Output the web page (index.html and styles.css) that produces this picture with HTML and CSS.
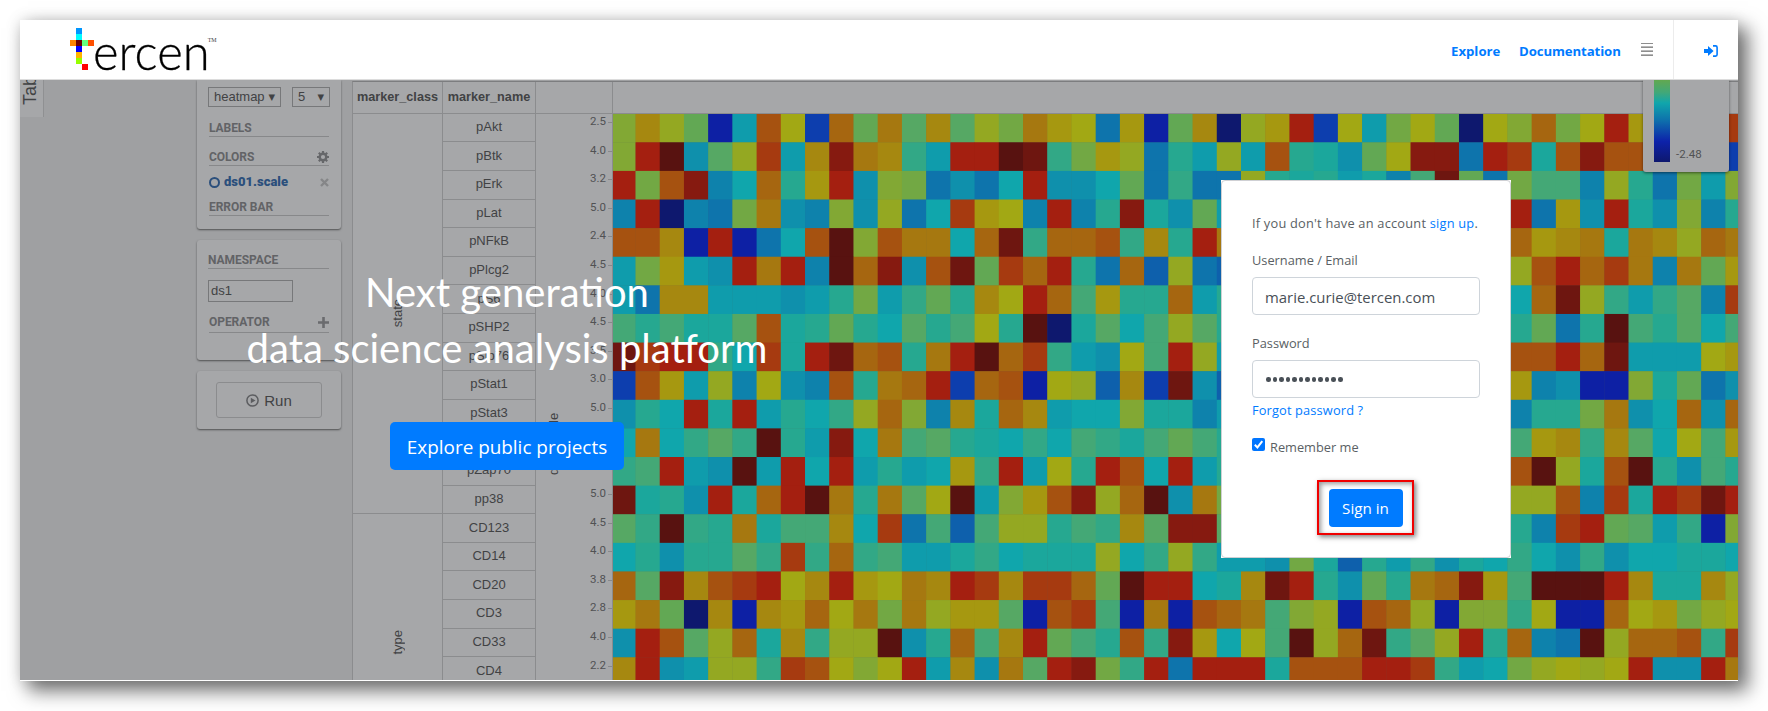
FILE: index.html
```
<!DOCTYPE html>
<html lang="en">
<head>
<meta charset="utf-8">
<title>Tercen</title>
<link rel="stylesheet" href="styles.css">
</head>
<body>
<div class="window">
  <header class="topbar">
    <a class="logo">
      <svg class="logo-mark" width="24" height="42" viewBox="0 0 24 42" shape-rendering="crispEdges">
        <rect x="6" y="0" width="6" height="6" fill="#0096ff"/>
        <rect x="6" y="6" width="6" height="6" fill="#00fcff"/>
        <rect x="0" y="12" width="6" height="6" fill="#ff8400"/>
        <rect x="6" y="12" width="6" height="6" fill="#6e0000"/>
        <rect x="12" y="12" width="6" height="6" fill="#64ff7f"/>
        <rect x="18" y="12" width="6" height="6" fill="#ff5000"/>
        <rect x="6" y="18" width="6" height="6" fill="#0000ff"/>
        <rect x="6" y="24" width="6" height="6" fill="#ffb400"/>
        <rect x="6" y="30" width="6" height="6" fill="#96ff00"/>
        <rect x="12" y="36" width="6" height="6" fill="#ff0000"/>
      </svg>
      <span class="logo-word">ercen</span><span class="logo-tm">TM</span>
    </a>
    <nav class="nav">
      <a class="nav-explore">Explore</a>
      <a class="nav-docs">Documentation</a>
      <svg class="nav-menu" width="12" height="13" viewBox="0 0 12 13" shape-rendering="crispEdges">
        <path d="M0 .5h12M0 4.5h12M0 8.5h12M0 12.5h12" stroke="#8e8e8e"/>
        <path d="M0 3.5h12M0 7.5h12M0 11.5h12" stroke="#b8b8b8"/>
      </svg>
      <span class="nav-login">
        <svg width="14" height="12" viewBox="0 0 14 12">
          <path d="M0 4h4V.9L9.6 6 4 11.100V8H0z" fill="#007bff"/>
          <path d="M9 .9h2.600a1.500 1.500 0 0 1 1.500 1.500v7.200a1.500 1.500 0 0 1-1.500 1.500H9" fill="none" stroke="#007bff" stroke-width="1.600"/>
        </svg>
      </span>
    </nav>
  </header>

  <main class="stage">
    <div class="backdrop">
      <div class="rail"><div class="rail-tab"><span>Tab</span></div></div>
      <aside class="sidebar">
        <section class="panel panel-settings">
          <div class="selects">
            <span class="select select-type">heatmap <i>▼</i></span>
            <span class="select select-size">5 <i>▼</i></span>
          </div>
          <h4 class="head head-labels">LABELS</h4>
          <h4 class="head head-colors">COLORS
            <svg width="12" height="12" viewBox="0 0 12 12"><circle cx="6" cy="6" r="3.300" fill="none" stroke="#66676a" stroke-width="2.400"/><path d="M6 0v2.200M6 9.800V12M0 6h2.200M9.800 6H12M1.800 1.800l1.500 1.500M8.700 8.700l1.500 1.500M10.200 1.800 8.700 3.300M3.300 8.700l-1.500 1.500" stroke="#66676a" stroke-width="2.200"/></svg>
          </h4>
          <div class="factor"><i class="ring"></i><b>ds01.scale</b>
            <svg width="9" height="9" viewBox="0 0 9 9"><path d="M1 1l7 7M8 1 1 8" stroke="#858688" stroke-width="2.400"/></svg>
          </div>
          <h4 class="head head-error">ERROR BAR</h4>
        </section>
        <section class="panel panel-namespace">
          <h4 class="head head-ns">NAMESPACE</h4>
          <div class="field">ds1</div>
          <h4 class="head head-op">OPERATOR
            <svg width="11" height="11" viewBox="0 0 11 11"><path d="M5.500 0v11M0 5.500h11" stroke="#6a6b6e" stroke-width="2.600"/></svg>
          </h4>
        </section>
        <section class="panel panel-run">
          <div class="run">
            <svg width="13" height="13" viewBox="0 0 13 13"><circle cx="6.500" cy="6.500" r="5.600" fill="none" stroke="#5c5d60" stroke-width="1.500"/><path d="M4.800 3.700v5.600l4.700-2.800z" fill="#5c5d60"/></svg>
            Run
          </div>
        </section>
      </aside>
      <div class="table">
        <div class="thead"><b class="th-class">marker_class</b><b class="th-name">marker_name</b><span class="th-axis"></span><span class="th-plot"></span></div>
        <div class="tbody">
          <div class="classes"><div class="class class-state"><span>state</span></div><div class="class class-type"><span>type</span></div></div>
          <div class="names" id="names"></div>
          <div class="axis"><span class="axis-title">ds01.scale</span><div class="ticks" id="ticks"></div></div>
          <svg class="heatmap" id="heatmap" width="1125" height="567"></svg>
        </div>
      </div>
      <div class="legend"><div class="legend-bar"></div><span>-2.48</span></div>
    </div>

    <div class="hero">
      <h1>Next generation<br>data science analysis platform</h1>
      <a class="hero-btn"><span>Explore public projects</span></a>
    </div>

    <div class="card-wrap">
      <form class="card">
        <p class="line line-signup">If you don't have an account <a>sign up</a>.</p>
        <p class="line line-user">Username / Email</p>
        <div class="input"><span>marie.curie@tercen.com</span></div>
        <p class="line line-pass">Password</p>
        <div class="input dots"><i></i><i></i><i></i><i></i><i></i><i></i><i></i><i></i><i></i><i></i><i></i><i></i></div>
        <p class="line line-forgot"><a>Forgot password ?</a></p>
        <p class="line line-remember">
          <svg width="13" height="13" viewBox="0 0 13 13"><rect width="13" height="13" rx="2" fill="#0075ff"/><path d="M2.800 6.800l2.600 2.600 4.900-6.300" fill="none" stroke="#fff" stroke-width="2"/></svg>
          <span>Remember me</span>
        </p>
        <div class="highlight"><a class="signin">Sign in</a></div>
      </form>
    </div>
  </main>
</div>
<script src="heatmap.js"></script>
</body>
</html>
```
FILE: styles.css
```
* { box-sizing: border-box; }
body { margin: 0; padding: 20px; height: 711px; overflow: hidden; background: #fff; font-family: "Open Sans", "Noto Sans", sans-serif; }
h1, h4, p { margin: 0; }
i { font-style: normal; }
.window { width: 1718px; height: 661px; background: #fff; box-shadow: 9px 9px 18px 1px rgba(0,0,0,.55), 0 0 14px rgba(0,0,0,.12); }

.topbar { display: flex; justify-content: space-between; height: 60px; border-bottom: 1px solid #dcdcdc; }
.logo { display: flex; align-items: flex-start; padding: 7px 0 0 50px; color: #000; }
.logo-mark { margin-top: 1px; }
.logo-word { margin: -6px 0 0 -1px; font: 300 49px/60px Lato, sans-serif; letter-spacing: 0; -webkit-text-stroke: .3px #000; }
.logo-tm { margin: 9px 0 0 -2px; font: 6px/8px "Liberation Serif", serif; color: #444; }
.nav { display: flex; align-items: center; height: 59px; color: #007bff; font-size: 13.200px; font-weight: 700; }
.nav a { line-height: 20px; margin-top: 2px; white-space: nowrap; }
.nav-explore { width: 68px; }
.nav-docs { width: 122px; letter-spacing: -.1px; }
.nav-menu { width: 12px; margin-right: 20px; }
.nav-login { display: flex; align-items: center; width: 65px; height: 59px; padding: 3px 0 0 30px; border-left: 1px solid #ececec; }

.stage { position: relative; height: 600px; overflow: hidden; }
.backdrop { display: flex; height: 600px; background: #9fa0a2; font-family: "Liberation Sans", Arial, sans-serif; color: #414244; }
.rail { width: 177px; }
.rail-tab { display: flex; justify-content: center; width: 24px; height: 37px; overflow: hidden; background: #a6a7a9; border-right: 1px solid #8f9092; align-items: flex-end; padding: 0 3px 12px 0; }
.rail-tab span { writing-mode: vertical-rl; transform: rotate(180deg); font-size: 18px; line-height: 20px; }
.sidebar { display: flex; flex-direction: column; width: 144px; font-size: 13px; }
.panel { background: #a6a7a9; border-radius: 3px; box-shadow: 0 1px 2px rgba(0,0,0,.5); }
.panel-settings { height: 149px; padding: 7px 11px 0; border-radius: 0 0 3px 3px; }
.selects { display: flex; gap: 11px; }
.select { display: flex; align-items: center; justify-content: space-between; height: 20px; padding: 0 5px 1px; border: 1px solid #77787a; }
.select i { font: 8.500px/12px "DejaVu Sans", sans-serif; }
.select-type { width: 73px; }
.select-size { width: 38px; }
.head { display: flex; justify-content: space-between; align-items: center; margin-left: 1px; width: 120px; font: 700 12px/16px Roboto, sans-serif; color: #626366; border-bottom: 1px solid #87888a; letter-spacing: -.05px; }
.head-labels { height: 19px; margin-top: 11px; padding-top: 1px; }
.head-colors { height: 19px; margin-top: 10px; padding-top: 1px; }
.factor { display: flex; align-items: center; height: 18px; margin: 7px 0 0 1px; width: 120px; color: #2b4f7c; font: 700 13px/18px Roboto, sans-serif; }
.factor svg { margin-left: auto; }
.ring { width: 11px; height: 11px; margin-right: 4px; border: 2px solid #2b4f7c; border-radius: 50%; }
.head-error { height: 18px; margin-top: 7px; }
.panel-namespace { height: 120px; margin-top: 11px; padding: 11px 11px 0; }
.head-ns { height: 18px; margin-left: 0; width: 121px; }
.field { display: flex; align-items: center; width: 85px; height: 22px; margin-top: 11px; padding: 0 0 1px 2px; border: 1px solid #77787a; }
.head-op { height: 20px; margin-top: 11px; padding-bottom: 1px; }
.panel-run { height: 58px; margin-top: 11px; padding: 11px 19px; }
.run { display: flex; align-items: center; justify-content: center; gap: 5px; height: 36px; border: 1px solid #8b8c8e; border-radius: 3px; font-size: 15px; }

.table { width: 1386px; margin: 1px 0 0 11px; background: #a6a7a9; border-left: 1px solid #8b8c8e; border-top: 1px solid #7c7d7f; flex: none; }
.thead { display: flex; height: 32px; border-bottom: 1px solid #8b8c8e; font-size: 12.700px; }
.thead > * { display: flex; align-items: center; justify-content: center; height: 31px; padding-bottom: 2px; border-right: 1px solid #8b8c8e; }
.th-class { width: 90px; }
.th-name { width: 93px; }
.th-axis { width: 77px; }
.thead .th-plot { flex: 1; border-right: 0; }
.tbody { display: flex; height: 567px; overflow: hidden; }
.classes { width: 90px; border-right: 1px solid #8b8c8e; font-size: 13px; }
.class { display: flex; align-items: center; justify-content: center; }
.class span, .axis-title { writing-mode: vertical-rl; transform: rotate(180deg); line-height: 16px; }
.class-state { height: 400px; border-bottom: 1px solid #8b8c8e; }
.class-type { height: 257px; padding-right: 0; }
.names { width: 93px; border-right: 1px solid #8b8c8e; font-size: 13px; }
.name { display: flex; align-items: center; justify-content: center; height: 28.610px; padding-bottom: 2px; border-bottom: 1px solid #8b8c8e; }
.name:first-child { height: 28.300px; }
.axis { display: flex; width: 77px; border-right: 1px solid #8b8c8e; }
.axis-title { margin: 299px 0 0 10px; height: 62px; font-size: 13px; white-space: nowrap; }
.ticks { margin: -1px 0 0 auto; font: 11.500px/16px Roboto, sans-serif; color: #515254; }
.tick { display: flex; align-items: flex-start; height: 28.610px; gap: 2px; }
.tick i { width: 4px; height: 1px; margin-top: 9px; background: #88898b; }
.heatmap { display: block; flex: none; background: #56605a; }
.legend { position: absolute; left: 1623px; top: 0; display: flex; width: 86px; height: 92px; padding-left: 11px; background: #a6a7a9; border-radius: 0 0 3px 3px; box-shadow: 0 1px 3px rgba(0,0,0,.5); }
.legend-bar { width: 16px; height: 82px; background: linear-gradient(#62a850, #42a878 15%, #10a6ac 28%, #0e74ac 48%, #0d22aa 75%, #0e186e); }
.legend span { margin: 66px 0 0 6px; font: 11.500px/16px Roboto, sans-serif; color: #515254; }

.hero { position: absolute; left: 170px; top: 184px; width: 634px; display: flex; flex-direction: column; align-items: center; color: #fff; }
.hero h1 { font: 400 40px/56px Lato, sans-serif; text-align: center; white-space: nowrap; }
.hero-btn { display: flex; align-items: center; justify-content: center; width: 234px; height: 48px; margin-top: 46px; padding-top: 1px; background: #007bff; border-radius: 5px; font-size: 18.900px; white-space: nowrap; }

.card-wrap { position: absolute; left: 1201px; top: 100px; background: #fff; }
.card { display: flex; flex-direction: column; width: 290px; height: 378px; padding: 31px 30px 0; border: 1px solid #cfd0d4; border-radius: 4px; color: #5a5f64; font-size: 12.800px; }
.card a { color: #007bff; }
.line { height: 20px; line-height: 22px; white-space: nowrap; }
.line-signup { letter-spacing: .22px; }
.line-user, .line-pass { margin: 17px 0 8px; }
.input { display: flex; align-items: center; height: 38px; padding: 1px 0 0 12px; border: 1px solid #ced4da; border-radius: 4px; color: #495057; font-size: 14.900px; }
.dots { gap: 2.050px; padding-left: 13px; }
.dots i { width: 4.500px; height: 4.500px; border-radius: 50%; background: #495057; }
.line-forgot { margin-top: 1px; letter-spacing: .15px; }
.line-remember { display: flex; gap: 5px; margin-top: 17px; }
.line-remember svg { margin-top: 2px; }
.highlight { display: flex; align-items: center; justify-content: center; align-self: center; width: 97px; height: 55px; margin: 24px 0 0 -1px; border: 2px solid #f00000; box-shadow: 2px 2px 5px rgba(0,0,0,.5), inset 2px 2px 5px rgba(0,0,0,.4); }
.card .signin { width: 74px; height: 38px; background: #007bff; color: #fff; border-radius: 4px; font-size: 15.200px; line-height: 39px; text-align: center; }
```
FILE: heatmap.js
```
// Colour ramp from lowest (a) to highest (C) value.
const ramp = {
  a: '#0e186e', b: '#0d20a4', c: '#0d3eae', d: '#0e60ac', e: '#0e74ac', f: '#0e82ac', g: '#0f90ac', h: '#0f9cac',
  i: '#10a6ac', j: '#1ba79c', k: '#26a890', l: '#32a886', m: '#44a876', n: '#56a864', o: '#62a854', p: '#72a844',
  q: '#82a834', r: '#94a822', s: '#a2a814', t: '#a69810', u: '#a68810', v: '#a67810', w: '#a66610', x: '#a65210',
  y: '#a63a10', z: '#a41f10', A: '#861a10', B: '#6e1610', C: '#581210'
};
const hidden = 'kkkkkkkkkkk';
const rows = [
  ['pAkt', '2.5', 'qurobhxscwovn' + 'unrpvtsetboua' + 'rtzcshpsoasqw' + 'psztttty'],
  ['pBtk', '4.0', 'qzCgnryhuAvul' + 'hzzCBlptrekhr' + 'hxkjgosAAezyj' + 'xAxxxxxc'],
  ['pErk', '3.2', 'zpxAfiwktzgqp' + 'egeizggioelee' + 'rkjkhjfmBoepm' + 'mfrkephq'],
  ['pLat', '5.0', 'fzafepvgfqgre' + 'iytsfzfkAjgoh' + hidden + 'ze' + 'tgzjgqfk'],
  ['pNFkB', '2.4', 'xxubzbeixCqxv' + 'viwBlwwxlukzv' + hidden + 'wt' + 'uvjvurwv'],
  ['pPlcg2', '4.5', 'hpthgzvzfCwAg' + 'xBoywzkewdred' + hidden + 'rx' + 'zwyvfvot'],
  ['pS6', '4.0', 'heuuhhhghkphl' + 'okuszwmtkkwhk' + hidden + 'iw' + 'Brlhlnfy'],
  ['pSHP2', '4.5', 'mkmjjnxjkokin' + 'kmskCajnimrnk' + hidden + 'ko' + 'ekCmknim'],
  ['pSlp76', '3.5', 'ByzzliyjzBwxk' + 'vzCwylhgsmzrh' + hidden + 'xx' + 'zwBhhhst'],
  ['pStat1', '3.0', 'cxthrfsgfxkvw' + 'zcwxbsrducBgd' + hidden + 'tf' + 'gbbqjoeg'],
  ['pStat3', '5.0', 'gkizjzhkilrwq' + 'fujwuhiiqjjfh' + hidden + 'fk' + 'kpvgiwgw'],
  ['pStat5', '4.0', 'ivilnlCkhAivm' + 'nkjilimljmomk' + hidden + 'mt' + 'ulunismt'],
  ['pZap70', '3.5', 'lmzhgChzizhkh' + 'itlzhskzxizhk' + hidden + 'xC' + 'rjxCkgmk'],
  ['pp38', '5.0', 'BjkgzjwzCvkvn' + 'sChqtxArwCgvp' + hidden + 'rr' + 'xfyjzyBz'],
  ['CD123', '4.5', 'nlClkvjmmuiye' + 'mdmrrkmlunAAn' + hidden + 'kf' + 'yzonhlbq'],
  ['CD14', '4.0', 'ikgkknlylwlmh' + 'hjlijjjrilrlh' + 'hgpjdkhlgjili' + 'glgiijji'],
  ['CD20', '3.8', 'wnAuxyzsuztsv' + 'uzyuyywoCzzij' + 'uBzkgokvwAtmC' + 'CCzujjur'],
  ['CD3', '2.8', 'tvoaubutwsvpv' + 'rttnbxymbvbxw' + 'vmqrbxwrbqqls' + 'bbwstprs'],
  ['CD33', '4.0', 'gzxnrwjulrrCg' + 'kwmuzomkxlAti' + 'smCrwBlnrzkwf' + 'eCrwwxly'],
  ['CD4', '2.2', 'uzghrrlyxsqsz' + 'hugvnzAplzezz' + 'zjxxxzzylhipr' + 'srszggzv']
];

const colWidth = 24.22, rowHeight = 28.61;
let names = '', ticks = '', cells = '';
rows.forEach(([name, tick, values], r) => {
  names += `<div class="name">${name}</div>`;
  ticks += `<div class="tick">${tick}<i></i></div>`;
  [...values].forEach((v, c) => {
    const x = (22.5 + colWidth * (c - 1)).toFixed(2), y = (28.3 + rowHeight * (r - 1)).toFixed(2);
    // A slight overlap keeps the seams between cells faint.
    cells += `<rect x="${x}" y="${y}" width="${colWidth + 0.4}" height="${rowHeight + 0.4}" fill="${ramp[v]}"/>`;
  });
});
document.getElementById('names').innerHTML = names;
document.getElementById('ticks').innerHTML = ticks;
document.getElementById('heatmap').innerHTML = cells;
```
